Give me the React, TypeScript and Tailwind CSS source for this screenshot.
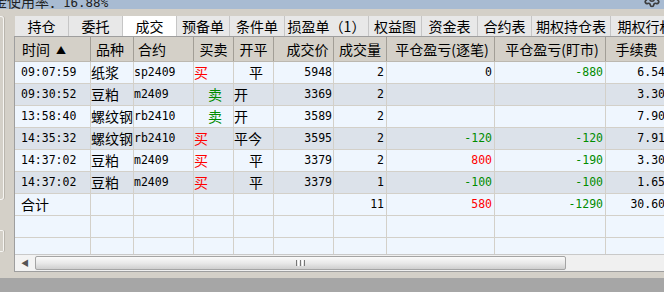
import { Settings } from "lucide-react";

const cjk = "font-['Noto_Sans_CJK_SC',sans-serif]";
const mono = "font-['DejaVu_Sans_Mono','Noto_Sans_CJK_SC',monospace]";

const tabs = [
  { label: "持仓", w: "w-[54px]" },
  { label: "委托", w: "w-[54px]" },
  { label: "成交", w: "w-[54px]", active: true },
  { label: "预备单", w: "w-[53px]" },
  { label: "条件单", w: "w-[55px]" },
  { label: "损盈单（1）", w: "w-[84px]" },
  { label: "权益图", w: "w-[53px]" },
  { label: "资金表", w: "w-[56px]" },
  { label: "合约表", w: "w-[54px]" },
  { label: "期权持仓表", w: "w-[79px]" },
  { label: "期权行权", w: "w-[70px]" },
];

// column widths include the 1px right grid line
const cols = ["w-[76px]", "w-[43px]", "w-[60px]", "w-[40px]", "w-[40px]", "w-[60px]", "w-[53px]", "w-[108px]", "w-[111px]", "w-[62px]"];

const headers = [
  { label: "时间 ▲", cls: "justify-start pl-[7px]" },
  { label: "品种", cls: "justify-start pl-[5px]" },
  { label: "合约", cls: "justify-start pl-[4px]" },
  { label: "买卖", cls: "justify-center" },
  { label: "开平", cls: "justify-center" },
  { label: "成交价", cls: "justify-center pl-[8px]" },
  { label: "成交量", cls: "justify-center" },
  { label: "平仓盈亏(逐笔)", cls: "justify-center pl-[3px]" },
  { label: "平仓盈亏(盯市)", cls: "justify-center pl-[4px]" },
  { label: "手续费", cls: "justify-center" },
];

const trades = [
  { time: "09:07:59", name: "纸浆", code: "sp2409", side: "买", oc: "平", price: "5948", qty: "2", p1: "0", p2: "-880", fee: "6.54" },
  { time: "09:30:52", name: "豆粕", code: "m2409", side: "卖", oc: "开", price: "3369", qty: "2", p1: "", p2: "", fee: "3.30" },
  { time: "13:58:40", name: "螺纹钢", code: "rb2410", side: "卖", oc: "开", price: "3589", qty: "2", p1: "", p2: "", fee: "7.90" },
  { time: "14:35:32", name: "螺纹钢", code: "rb2410", side: "买", oc: "平今", price: "3595", qty: "2", p1: "-120", p2: "-120", fee: "7.91" },
  { time: "14:37:02", name: "豆粕", code: "m2409", side: "买", oc: "平", price: "3379", qty: "2", p1: "800", p2: "-190", fee: "3.30" },
  { time: "14:37:02", name: "豆粕", code: "m2409", side: "买", oc: "平", price: "3379", qty: "1", p1: "-100", p2: "-100", fee: "1.65" },
];

function pnlColor(v: string) {
  const n = parseFloat(v);
  if (isNaN(n) || n === 0) return "text-black";
  return n < 0 ? "text-[#008c00]" : "text-[#ff0000]";
}

function Cell({ i, className = "", children }: { i: number; className?: string; children?: React.ReactNode }) {
  return (
    <div className={`${cols[i]} shrink-0 h-full flex items-center border-r border-[#d3d0c9] overflow-hidden whitespace-nowrap ${className}`}>
      {children}
    </div>
  );
}

function Row({ t, dark }: { t?: (typeof trades)[number]; dark: boolean }) {
  const bg = dark ? "bg-[#dce2ea]" : "bg-[#eff6fe]";
  return (
    <div className={`flex h-[22px] shrink-0 border-b border-[#d3d0c9] ${bg}`}>
      <Cell i={0} className={`pl-[6px] ${mono} text-[11.5px]`}>{t?.time}</Cell>
      <Cell i={1} className={`${cjk} text-[14px]`}>{t?.name}</Cell>
      <Cell i={2} className={`${mono} text-[11.5px]`}>{t?.code}</Cell>
      <Cell i={3} className={`${cjk} text-[14px]`}>
        {t && (
          <span className={t.side === "买" ? "text-[#ff0000]" : "text-[#008c00] pl-[14px]"}>{t.side}</span>
        )}
      </Cell>
      <Cell i={4} className={`${cjk} text-[14px]`}>
        {t && <span className={t.oc === "平" ? "pl-[15px]" : ""}>{t.oc}</span>}
      </Cell>
      <Cell i={5} className={`justify-end pr-[1px] ${mono} text-[11.5px]`}>{t?.price}</Cell>
      <Cell i={6} className={`justify-end pr-[2px] ${mono} text-[11.5px]`}>{t?.qty}</Cell>
      <Cell i={7} className={`justify-end pr-[2px] ${mono} text-[11.5px] ${pnlColor(t?.p1 ?? "")}`}>{t?.p1}</Cell>
      <Cell i={8} className={`justify-end pr-[2px] ${mono} text-[11.5px] ${pnlColor(t?.p2 ?? "")}`}>{t?.p2}</Cell>
      <Cell i={9} className={`justify-end pr-[2px] ${mono} text-[11.5px]`}>{t?.fee}</Cell>
    </div>
  );
}

export default function App() {
  return (
    <div className={`w-[664px] h-[292px] overflow-hidden bg-[#d4d0c8] text-black flex flex-col ${cjk}`}>
      {/* top status strip, mostly cut off */}
      <div className="relative h-[9px] shrink-0 bg-[#a8bbd2] overflow-hidden">
        <div className="-mt-[7px] -ml-[21px] text-[14px] leading-[16px] text-[#222] whitespace-nowrap">
          资金使用率：<span className={`${mono} text-[12.5px]`}>16.88%</span>
        </div>
        <Settings size={18} strokeWidth={2.2} color="#3c3c3c" className="absolute right-[3px] -top-[10px]" />
      </div>

      <div className="flex h-[263px] shrink-0">
        {/* left edge of neighbouring panel */}
        <div className="w-[14px] shrink-0 flex flex-col">
          <div className="mt-[7px] h-[184px] w-[5px] -ml-[1px] border border-l-0 border-[#f6f5f2] rounded-r-[3px] shadow-[1px_0_0_#b9b5ad]" />
          <div className="mt-[30px] h-[22px] w-[5px] -ml-[1px] border border-l-0 border-[#f6f5f2] rounded-r-[2px] shadow-[1px_0_0_#b9b5ad]" />
        </div>

        <div className="flex-1 min-w-0 flex flex-col">
          {/* tabs */}
          <div className="mt-[7px] ml-[1px] h-[20px] shrink-0 flex bg-[#e8e8e8]">
            {tabs.map((t) => (
              <div
                key={t.label}
                className={`${t.w} shrink-0 flex items-center justify-center text-[14px] leading-none whitespace-nowrap border-r border-[#c6c6c6] ${
                  t.active ? "bg-white" : "bg-[#e8e8e8]"
                }`}
              >
                {t.label}
              </div>
            ))}
          </div>

          {/* grid panel */}
          <div className="flex-1 flex flex-col border-l border-t border-b border-[#9e9e9e] overflow-hidden bg-[#eff6fe]">
            <div className="flex h-[25px] shrink-0 bg-[#d4d0c8] border-b border-[#bcb8b0]">
              {headers.map((h, i) => (
                <div
                  key={h.label}
                  className={`${cols[i]} shrink-0 h-full flex items-center text-[14px] whitespace-nowrap border-r border-[#a29e96] ${h.cls}`}
                >
                  {h.label === "时间 ▲" ? (
                    <>
                      时间<span className="ml-[6px] text-[10px]">▲</span>
                    </>
                  ) : (
                    h.label
                  )}
                </div>
              ))}
            </div>

            {trades.map((t, i) => (
              <Row key={i} t={t} dark={i % 2 === 1} />
            ))}

            {/* total */}
            <div className="flex h-[22px] shrink-0 border-b border-[#d3d0c9] bg-[#eff6fe]">
              <Cell i={0} className="pl-[6px] text-[14px]">合计</Cell>
              <Cell i={1} />
              <Cell i={2} />
              <Cell i={3} />
              <Cell i={4} />
              <Cell i={5} />
              <Cell i={6} className={`justify-end pr-[2px] ${mono} text-[11.5px]`}>11</Cell>
              <Cell i={7} className={`justify-end pr-[2px] ${mono} text-[11.5px] text-[#ff0000]`}>580</Cell>
              <Cell i={8} className={`justify-end pr-[2px] ${mono} text-[11.5px] text-[#008c00]`}>-1290</Cell>
              <Cell i={9} className={`justify-end pr-[2px] ${mono} text-[11.5px]`}>30.60</Cell>
            </div>

            <Row dark={false} />

            {/* filler with grid lines */}
            <div className="flex flex-1">
              {cols.map((c, i) => (
                <div key={i} className={`${c} shrink-0 border-r border-[#d3d0c9]`} />
              ))}
            </div>

            {/* horizontal scrollbar */}
            <div className="h-[17px] shrink-0 flex bg-[#f0f0f0] border-t border-[#c9c9c9]">
              <div className="w-[20px] shrink-0 flex items-center justify-center text-[8px] text-[#555] bg-[#f3f3f3]">◀</div>
              <div className="w-[531px] shrink-0 my-[1px] rounded-[2px] border border-[#a4a4a4] bg-gradient-to-b from-[#fafafa] via-[#e9e9e9] to-[#cfcfcf] flex items-center justify-center gap-[1px]">
                <div className="w-[1px] h-[6px] bg-[#777]" />
                <div className="w-[1px] h-[6px] bg-[#fff]" />
                <div className="w-[1px] h-[6px] bg-[#777]" />
                <div className="w-[1px] h-[6px] bg-[#fff]" />
                <div className="w-[1px] h-[6px] bg-[#777]" />
              </div>
              <div className="flex-1" />
            </div>
          </div>
        </div>
      </div>

      <div className="h-[6px] shrink-0 bg-[#d4d0c8]" />
      <div className="flex-1 bg-[#a6a6a6]" />
    </div>
  );
}
